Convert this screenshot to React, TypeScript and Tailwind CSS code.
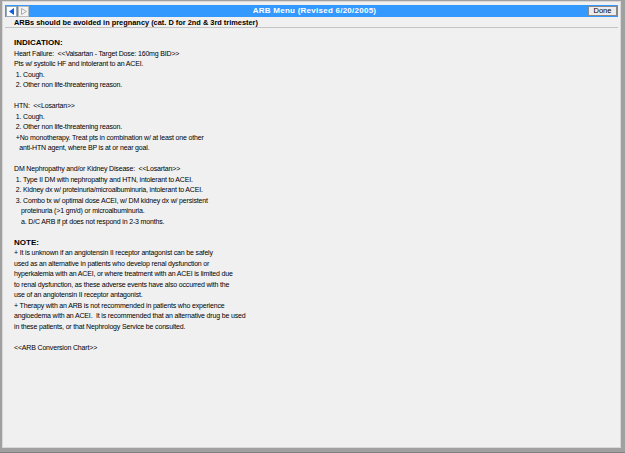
const lines: { t: string; b?: boolean }[] = [
  { t: 'INDICATION:', b: true },
  { t: 'Heart Failure:  <<Valsartan - Target Dose: 160mg BID>>' },
  { t: 'Pts w/ systolic HF and intolerant to an ACEI.' },
  { t: ' 1. Cough.' },
  { t: ' 2. Other non life-threatening reason.' },
  { t: '' },
  { t: 'HTN:  <<Losartan>>' },
  { t: ' 1. Cough.' },
  { t: ' 2. Other non life-threatening reason.' },
  { t: ' +No monotherapy. Treat pts in combination w/ at least one other' },
  { t: '   anti-HTN agent, where BP is at or near goal.' },
  { t: '' },
  { t: 'DM Nephropathy and/or Kidney Disease:  <<Losartan>>' },
  { t: ' 1. Type II DM with nephropathy and HTN, intolerant to ACEI.' },
  { t: ' 2. Kidney dx w/ proteinuria/microalbuminuria, intolerant to ACEI.' },
  { t: ' 3. Combo tx w/ optimal dose ACEI, w/ DM kidney dx w/ persistent' },
  { t: '    proteinuria (>1 gm/d) or microalbuminuria.' },
  { t: '    a. D/C ARB if pt does not respond in 2-3 months.' },
  { t: '' },
  { t: 'NOTE:', b: true },
  { t: '+ It is unknown if an angiotensin II receptor antagonist can be safely' },
  { t: 'used as an alternative in patients who develop renal dysfunction or' },
  { t: 'hyperkalemia with an ACEI, or where treatment with an ACEI is limited due' },
  { t: 'to renal dysfunction, as these adverse events have also occurred with the' },
  { t: 'use of an angiotensin II receptor antagonist.' },
  { t: '+ Therapy with an ARB is not recommended in patients who experience' },
  { t: 'angioedema with an ACEI.  It is recommended that an alternative drug be used' },
  { t: 'in these patients, or that Nephrology Service be consulted.' },
  { t: '' },
  { t: '<<ARB Conversion Chart>>' },
];

export default function App() {
  return (
    <div
      className="w-[625px] h-[453px] bg-[#a0a0a0] pl-[2px] pt-[1px] pr-[4px] pb-[4px] border-b border-[#808080]"
      style={{ fontFamily: '"Liberation Sans", Arial, sans-serif' }}
    >
      <div className="w-full h-full bg-[#f0f0f0] border border-[#d8d8d8] pl-[2px] pt-[3px] pr-[2px] flex flex-col">
        {/* title bar */}
        <div className="h-[12px] bg-[#3399ff] flex items-center">
          <div className="flex h-[11px] gap-[1px] ml-[1px]">
            <div className="w-[11px] h-[11px] bg-white border border-[#9ab] flex items-center justify-center">
              <svg width="6" height="7" viewBox="0 0 6 7">
                <polygon points="5,0 5,7 0,3.5" fill="#1060e0" />
              </svg>
            </div>
            <div className="w-[11px] h-[11px] bg-[#f4f4f4] border border-[#bbb] flex items-center justify-center">
              <svg width="6" height="7" viewBox="0 0 6 7">
                <polygon points="0.5,0.5 0.5,6.5 5.5,3.5" fill="none" stroke="#aaa" strokeWidth="1" />
              </svg>
            </div>
          </div>
          <div className="flex-1 text-center text-white font-bold text-[8px] leading-[12px] tracking-[0.25px] pl-[12px]">
            ARB Menu (Revised 6/20/2005)
          </div>
          <div className="w-[29px] h-[10px] mr-[1px] bg-[#ececec] border border-[#888] text-[7.5px] leading-[8px] text-black text-center">
            Done
          </div>
        </div>
        {/* subtitle */}
        <div className="h-[11px] border-b border-[#c4c4c4] pl-[9px] text-[7.4px] leading-[11px] font-bold text-black">
          ARBs should be avoided in pregnancy (cat. D for 2nd &amp; 3rd trimester)
        </div>
        {/* body */}
        <div className="pl-[9px] pt-[10px] text-[7px] leading-[10.5px] text-black tracking-[-0.17px]">
          {lines.map((l, i) => (
            <div key={i} className={l.b ? 'font-bold text-[8px] tracking-normal whitespace-pre' : 'whitespace-pre'}>
              {l.t || '\u00a0'}
            </div>
          ))}
        </div>
      </div>
    </div>
  );
}
